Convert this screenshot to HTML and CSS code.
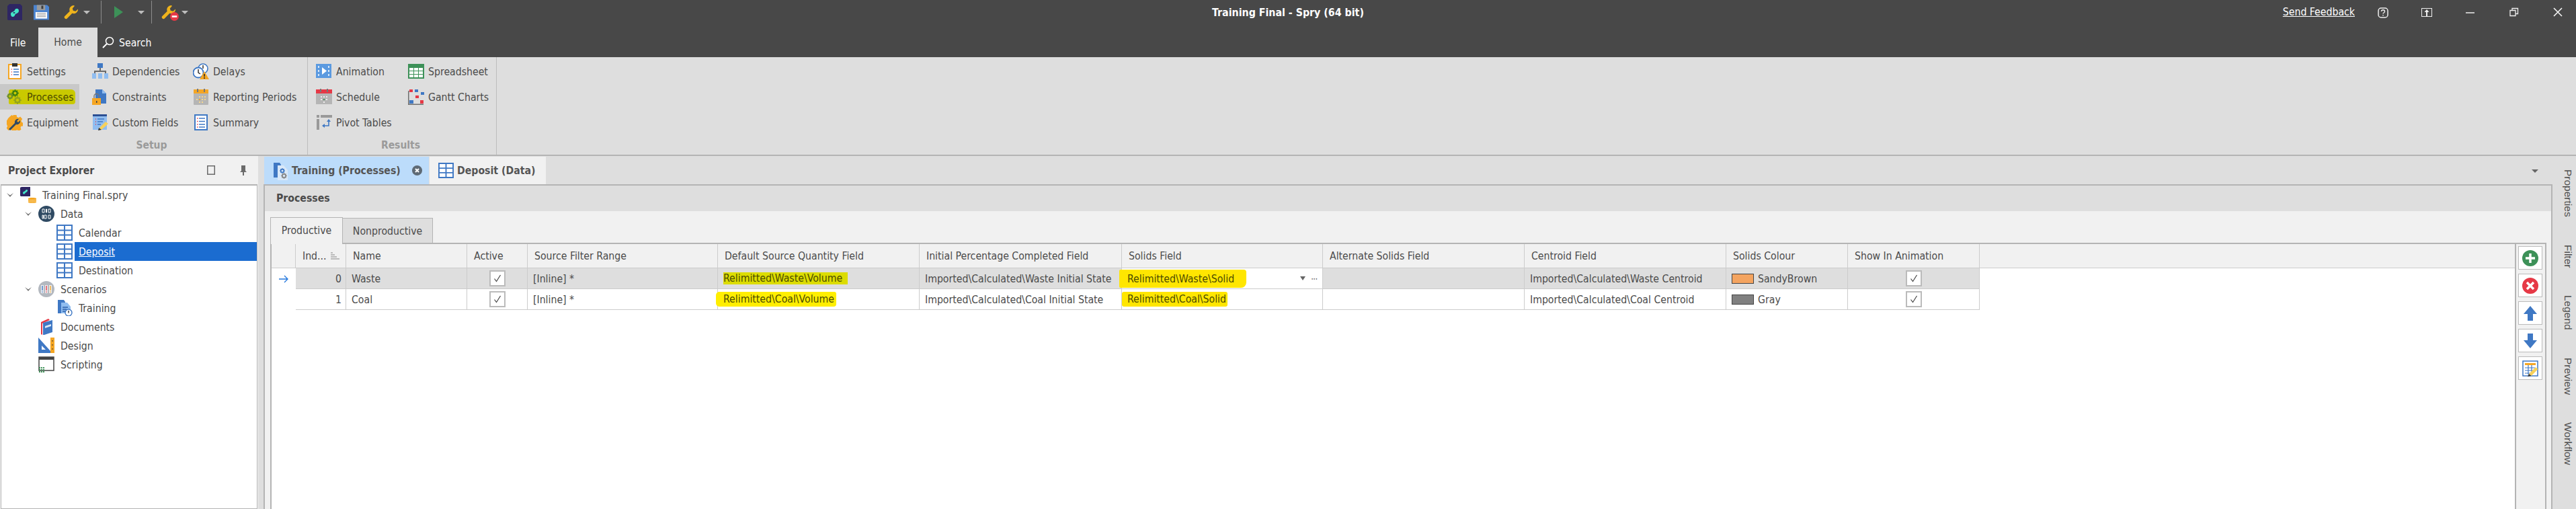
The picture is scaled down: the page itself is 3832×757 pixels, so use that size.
FILE: index.html
```html
<!DOCTYPE html>
<html lang="en">
<head>
<meta charset="utf-8">
<title>Training Final - Spry (64 bit)</title>
<link rel="stylesheet" href="styles.css">
</head>
<body>
<svg class="defs" width="0" height="0" aria-hidden="true">
  <symbol id="i-table" viewBox="0 0 24 24"><path d="M1 1h22v22H1zM12 1v22M1 8.500h22M1 15.500h22" fill="#fff" stroke="#3f78c4" stroke-width="2"/></symbol>
  <symbol id="i-chev" viewBox="0 0 10 8"><path d="M0 1l5 3.500L10 1 5 7z" fill="#6f6f6f"/></symbol>
  <symbol id="i-wrench" viewBox="0 0 24 24"><path d="M16 1a7 7 0 0 0-6.500 9.500L1.500 18.500a2.500 2.500 0 0 0 4 3.500l8-8A7 7 0 0 0 23 7l-4 3.500-4-1-1-3.500 3.500-4z" fill="#eeb31c"/></symbol>
  <symbol id="i-gear" viewBox="0 0 12 12"><circle cx="6" cy="6" r="3.500" fill="none" stroke="currentColor" stroke-width="2.500"/><path d="M6 0v2M6 10v2M0 6h2M10 6h2M2 2l1.500 1.500M8.500 8.500L10 10M10 2L8.500 3.500M3.500 8.500L2 10" stroke="currentColor" stroke-width="1.600"/></symbol>
</svg>

<header class="titlebar">
  <div class="qat-row">
    <div class="qat">
      <svg class="q-logo" viewBox="0 0 24 24"><path d="M2 3l3-3h16l3 3v21H3l-1-1z" fill="#2e2663"/><path d="M7 15c0-4 5-3 6-6 1-3 6-3 6 1 0 3-3 4-5 5-1 1-1 4-4 4-2 0-3-2-3-4zm5-3c2 0 2 2 0 2-2 0-2-2 0-2z" fill="#43e3c6" fill-rule="evenodd"/></svg>
      <svg class="q-save" viewBox="0 0 24 24"><path d="M0 1h21l3 3v20H0z" fill="#4a83cf"/><path d="M5 1h13v8H5z" fill="#9a9a9a"/><path d="M12 2h3v5h-3z" fill="#3d3d3d"/><path d="M3 12h18v10H3z" fill="#fff"/><path d="M5 14h14M5 16.500h14M5 19h14" stroke="#8a8a8a"/></svg>
      <svg class="q-wrench"><use href="#i-wrench"/></svg>
      <span class="caret q-caret1"></span>
      <span class="q-sep"></span>
      <svg class="q-play" viewBox="0 0 13 18"><path d="M0 0l13 9-13 9z" fill="#3d9158"/></svg>
      <span class="caret q-caret2"></span>
      <span class="q-sep q-sep2"></span>
      <span class="q-stop">
        <svg class="q-wrench2"><use href="#i-wrench"/></svg>
        <svg class="q-badge" viewBox="0 0 12 12"><circle cx="6" cy="6" r="6" fill="#e63946"/><path d="M2.500 4.800h7v2.400h-7z" fill="#fff"/></svg>
      </span>
      <span class="caret q-caret3"></span>
    </div>
    <div class="app-title">Training Final - Spry (64 bit)</div>
    <div class="win">
      <a class="feedback">Send Feedback</a>
      <svg class="w-btn w-help" viewBox="0 0 16 16"><rect x="1" y="1" width="14" height="14" rx="4" fill="none" stroke="#eee" stroke-width="1.500"/><path d="M5.500 6c0-3 5-3 5 0 0 2-2.500 2-2.500 3.500M8 11v1.500" fill="none" stroke="#eee" stroke-width="1.400"/></svg>
      <svg class="w-btn w-up" viewBox="0 0 16 16"><rect x=".5" y="1.500" width="15" height="12" fill="none" stroke="#eee"/><path d="M8 3l3.500 4h-2.500v6h-2V7H4.500z" fill="#eee"/></svg>
      <svg class="w-btn w-min" viewBox="0 0 14 14"><path d="M0 7h13" stroke="#eee" stroke-width="1.500"/></svg>
      <svg class="w-btn w-rest" viewBox="0 0 14 14"><path d="M1 4.500h8v8H1zM4 4.500V1.500h8.500v8H9" fill="none" stroke="#eee" stroke-width="1.300"/></svg>
      <svg class="w-btn w-close" viewBox="0 0 14 14"><path d="M1 1l12 12M13 1L1 13" stroke="#f4f4f4" stroke-width="1.600"/></svg>
    </div>
  </div>
  <nav class="menu-row">
    <span class="menu-file">File</span>
    <span class="menu-home">Home</span>
    <svg class="menu-search-ico" viewBox="0 0 18 18"><circle cx="11" cy="7" r="5.500" fill="none" stroke="#fff" stroke-width="1.500"/><path d="M7 11l-6 6" stroke="#fff" stroke-width="2"/></svg>
    <span class="menu-search">Search</span>
  </nav>
</header>

<section class="ribbon">
  <div class="r-group r-setup">
    <div class="r-grid r-grid-setup">
      <div class="r-item"><svg class="r-ico" viewBox="0 0 24 24"><path d="M3 2h18v21H3z" fill="#fff" stroke="#f5a623" stroke-width="2"/><path d="M8 0h8v5H8z" fill="#333"/><path d="M7 9h1M7 13h1M7 17h1" stroke="#e63946" stroke-width="1.500"/><path d="M10 9h8M10 13h8M10 17h8" stroke="#3f78c4" stroke-width="1.500"/></svg><span>Settings</span></div>
      <div class="r-item"><svg class="r-ico" viewBox="0 0 24 24"><path d="M8 0h8v7H8z" fill="#3f78c4"/><path d="M12 7v5M4 16v-4h16v4" fill="none" stroke="#6b6b6b" stroke-width="2"/><path d="M0 15h6v8H0zM9 15h6v8H9zM18 15h6v8h-6z" fill="#90bdf0"/></svg><span>Dependencies</span></div>
      <div class="r-item"><svg class="r-ico" viewBox="0 0 24 24"><circle cx="15" cy="8" r="7" fill="#fff" stroke="#3f78c4" stroke-width="1.600"/><circle cx="8" cy="14" r="7.500" fill="#fff" stroke="#3f78c4" stroke-width="1.800"/><path d="M8 9v5l3 2M15 3v5" fill="none" stroke="#333" stroke-width="1.500"/><path d="M17 12l7 12H10z" fill="#f5a623"/><path d="M17 16v4M17 21v2" stroke="#222" stroke-width="1.500"/></svg><span>Delays</span></div>

      <div class="r-item r-hot"><mark class="marker-hot"><svg class="r-ico r-ico-hot" viewBox="0 0 24 24"><g color="#6e8f2b"><use href="#i-gear" x="0" y="6" width="10" height="10"/></g><g color="#3a7d10"><use href="#i-gear" x="7" y="1" width="11" height="11"/></g><g color="#93a31c"><use href="#i-gear" x="10" y="11" width="12" height="12"/></g></svg><span>Processes</span></mark></div>
      <div class="r-item"><svg class="r-ico" viewBox="0 0 24 24"><path d="M5 1h10l6 6v15H5z" fill="#3f78c4"/><path d="M15 1l6 6h-6z" fill="#90bdf0"/><path d="M0 14h13v10H0z" fill="#f5a623"/><path d="M3 14v-3a3.500 3.500 0 0 1 7 0v3" fill="none" stroke="#777" stroke-width="1.500"/><path d="M6 18h1.500v3H6z" fill="#444"/></svg><span>Constraints</span></div>
      <div class="r-item"><svg class="r-ico" viewBox="0 0 24 24"><path d="M1 1h22v22H1z" fill="#f5a623"/><path d="M1 7h22v16a1 1 0 0 1-1 1H2a1 1 0 0 1-1-1z" fill="#b5b5b5"/><path d="M6 0h2v5H6zM16 0h2v5h-2z" fill="#777"/><path d="M9 11h2v2H9zM13 11h2v2h-2zM17 11h2v2h-2zM5 15h2v2H5zM13 15h2v2h-2zM17 15h2v2h-2zM9 19h2v2H9zM13 19h2v2h-2z" fill="#f5d78e"/><path d="M9 15h2v2H9z" fill="#f5a623"/></svg><span>Reporting Periods</span></div>

      <div class="r-item"><svg class="r-ico" viewBox="0 0 24 24"><path d="M9.500 1h5l.7 3 2.300 1 2.700-1.500 3 3.500-1.700 2.500.7 2.300 2.800 1-.5 4.500-3 .5-1 2 1 2.700-3.500 2.500-2.300-1.700-2.200.7-1 2.500h-4.500l-.7-3-2.300-1-2.500 1.500-3-3.500 1.600-2.500-.7-2.300-2.700-.8V9.500l3-.7 1-2.300L4 4l3.500-3 2 1.500z" fill="#f5a623"/><path d="M3 22l9-9a5 5 0 0 1 6-6l-3 3 2 2 3-3a5 5 0 0 1-6 6l-9 9z" fill="#2f4a63"/></svg><span>Equipment</span></div>
      <div class="r-item"><svg class="r-ico" viewBox="0 0 24 24"><path d="M1 0h21v23H1z" fill="#90bdf0"/><path d="M1 0h21v3H1z" fill="#2b4f93"/><path d="M5 7h1M5 11h1M5 15h1" stroke="#e63946" stroke-width="1.500"/><path d="M8 7h10M8 11h8M8 15h5" stroke="#3f78c4" stroke-width="1.500"/><path d="M10 21l10-10 4 3-10 9z" fill="#f7d15a"/><path d="M9 24l1-4 4 3z" fill="#333"/></svg><span>Custom Fields</span></div>
      <div class="r-item"><svg class="r-ico" viewBox="0 0 24 24"><path d="M3 1h18v22H3z" fill="#fff" stroke="#3f78c4" stroke-width="2"/><path d="M6 6h1.500M6 10.500h1.500M6 15h1.500M6 19h1.500" stroke="#e63946" stroke-width="1.500"/><path d="M9 6h9M9 10.500h9M9 15h9M9 19h9" stroke="#3f78c4" stroke-width="1.500"/></svg><span>Summary</span></div>
    </div>
    <div class="r-label">Setup</div>
  </div>
  <div class="r-group r-results">
    <div class="r-grid r-grid-results">
      <div class="r-item"><svg class="r-ico" viewBox="0 0 24 24"><path d="M0 1h23v21H0z" fill="#5b9ae0"/><path d="M3 4h2v3H3zM3 10h2v3H3zM3 16h2v3H3zM18 4h2v3h-2zM18 10h2v3h-2zM18 16h2v3h-2z" fill="#d9e8f8"/><path d="M9 6l7 5.500L9 17z" fill="#fff"/></svg><span>Animation</span></div>
      <div class="r-item"><svg class="r-ico" viewBox="0 0 24 24"><path d="M0 1h24v22H0z" fill="#3d9158"/><path d="M2 7h6v4H2zM9 7h6v4H9zM16 7h6v4h-6zM2 12h6v4H2zM9 12h6v4H9zM16 12h6v4h-6zM2 17h6v4H2zM9 17h6v4H9zM16 17h6v4h-6z" fill="#fff"/></svg><span>Spreadsheet</span></div>
      <div class="r-item"><svg class="r-ico" viewBox="0 0 24 24"><path d="M0 1h24v22H0z" fill="#b5b5b5"/><path d="M0 1h24v6H0z" fill="#e63946"/><path d="M6 0h2v5H6zM16 0h2v5h-2z" fill="#777"/><path d="M7 11h2v2H7zM11 11h2v2h-2zM15 11h2v2h-2zM7 15h2v2H7zM15 15h2v2h-2zM11 19h2v2h-2z" fill="#eee"/><path d="M11 15h2v2h-2z" fill="#3d9158"/></svg><span>Schedule</span></div>
      <div class="r-item"><svg class="r-ico" viewBox="0 0 24 24"><path d="M.750 3v20.250H23" fill="none" stroke="#6f6f6f" stroke-width="1.500"/><path d="M2 1h5v4H2z" fill="#e63946"/><path d="M10 1h5v4h-5zM19 5h5v4h-5zM2 17h6v5H2z" fill="#3f78c4"/><path d="M11 10h5v4h-5zM18 17h5v5h-5z" fill="#e63946"/></svg><span>Gantt Charts</span></div>
      <div class="r-item"><svg class="r-ico" viewBox="0 0 24 24"><path d="M7 1h17v4H7zM1 1h4v4H1zM1 7h4v16H1z" fill="#999"/><path d="M19 9v8h-8" fill="none" stroke="#3f78c4" stroke-width="1.600"/><path d="M19 7l3 4h-6zM9 17l4-3v6z" fill="#3f78c4"/></svg><span>Pivot Tables</span></div>
    </div>
    <div class="r-label">Results</div>
  </div>
</section>

<main class="workspace">
  <aside class="explorer">
    <div class="ex-head">
      <span class="ex-title">Project Explorer</span>
      <svg class="ex-square" viewBox="0 0 12 14"><path d="M.750.750h10.500v12.500H.750z" fill="none" stroke="#6b6b6b" stroke-width="1.500"/></svg>
      <svg class="ex-pin" viewBox="0 0 10 15"><path d="M2 0h6v8l2 2H0l2-2zM4 10h2v5H4z" fill="#6b6b6b"/></svg>
    </div>
    <div class="tree">
      <div class="t-row lv0"><svg class="chev"><use href="#i-chev"/></svg><svg class="t-ico" viewBox="0 0 24 24"><path d="M0 1l2-1h13v14H1l-1-1z" fill="#2e2663"/><path d="M4 9c0-3 4-2 4-4 1-2 4-1 3 1-1 2-3 2-4 4-1 1-3 1-3-1z" fill="#43e3c6"/><path d="M12 17c0-1.500 12-1.500 12 0v6c0 1.500-12 1.500-12 0z" fill="#f5a623"/><path d="M12 19c2 1 10 1 12 0M12 21.500c2 1 10 1 12 0" stroke="#fad68a" fill="none"/></svg><span class="t-label">Training Final.spry</span></div>
      <div class="t-row lv1"><svg class="chev"><use href="#i-chev"/></svg><svg class="t-ico" viewBox="0 0 24 24"><circle cx="12" cy="12" r="12" fill="#2f4a63"/><path d="M6 5h3v5H6zM11.500 5h1v5h-1zM15 5h3v5h-3zM6 14h1.500v5H6zM9 14h3v5H9zM15 14h3v5h-3z" fill="none" stroke="#fff"/></svg><span class="t-label">Data</span></div>
      <div class="t-row lv2"><svg class="t-ico"><use href="#i-table"/></svg><span class="t-label">Calendar</span></div>
      <div class="t-row lv2"><svg class="t-ico"><use href="#i-table"/></svg><span class="t-label t-sel">Deposit</span></div>
      <div class="t-row lv2"><svg class="t-ico"><use href="#i-table"/></svg><span class="t-label">Destination</span></div>
      <div class="t-row lv1"><svg class="chev"><use href="#i-chev"/></svg><svg class="t-ico" viewBox="0 0 24 24"><circle cx="12" cy="12" r="12" fill="#b3b8bf"/><path d="M4 6h4v12H4zM10 6h4v12h-4zM16 6h4v12h-4z" fill="#eef0f3"/><path d="M6 7v7M6 15.500v1.500" stroke="#3f78c4" stroke-width="1.400"/><path d="M12 7v7M12 15.500v1.500" stroke="#e63946" stroke-width="1.400"/><path d="M18 7v7M18 15.500v1.500" stroke="#f5a623" stroke-width="1.400"/></svg><span class="t-label">Scenarios</span></div>
      <div class="t-row lv2"><svg class="t-ico" viewBox="0 0 24 24"><path d="M2 0h9l2 3v17H2z" fill="#3f78c4"/><path d="M7 4h9l5 6v10H7z" fill="#90bdf0"/><path d="M9 11h8M9 14h6M9 17h5" stroke="#2b5fa8" stroke-width="1.300"/><circle cx="18" cy="19" r="5" fill="#fff" stroke="#3f78c4" stroke-width="1.400"/><path d="M18 16v3.500" stroke="#222" stroke-width="1.300"/></svg><span class="t-label">Training</span></div>
      <div class="t-row lv1 leaf"><svg class="t-ico" viewBox="0 0 24 24"><path d="M4 5L15 0l2 2-11 5v17L4 23z" fill="#e63946"/><path d="M7 6l14-4v18L9 24H7z" fill="#3f78c4"/><path d="M10 11l9-3v3l-9 3z" fill="#dce8f7"/></svg><span class="t-label">Documents</span></div>
      <div class="t-row lv1 leaf"><svg class="t-ico" viewBox="0 0 24 24"><path d="M0 0l18 20v3H0zM5 12v6h6z" fill="#3f78c4" fill-rule="evenodd"/><path d="M18 0h6v23h-6z" fill="#f5a623"/><path d="M20 5h2M20 11h2M20 17h2" stroke="#333" stroke-width="1.200"/></svg><span class="t-label">Design</span></div>
      <div class="t-row lv1 leaf"><svg class="t-ico" viewBox="0 0 24 24"><path d="M1 1h22v20H1z" fill="#fff" stroke="#444" stroke-width="1.500"/><path d="M1 1h22v4H1z" fill="#444"/><path d="M1 16h2v2H1zM4 16h2v2H4zM7 16h2v2H7zM1 19h2v2H1zM4 19h2v2H4zM7 19h2v2H7zM1 22h2v2H1zM4 22h2v2H4zM7 22h2v2H7z" fill="#3d9158"/></svg><span class="t-label">Scripting</span></div>
    </div>
  </aside>

  <section class="documents">
    <div class="doc-tabs">
      <div class="doc-tab doc-active">
        <svg class="dt-ico" viewBox="0 0 22 28"><path d="M0 2h9l2 3v19H0z" fill="#3f78c4"/><path d="M6 6h9l6 7v15H6z" fill="#d9e8f8"/><g color="#3f78c4"><use href="#i-gear" x="9" y="10" width="8" height="8"/></g><g color="#888"><use href="#i-gear" x="11" y="17" width="9" height="9"/></g></svg>
        <span class="dt-text">Training (Processes)</span>
        <svg class="dt-close" viewBox="0 0 15 15"><circle cx="7.500" cy="7.500" r="7.500" fill="#5e6a75"/><path d="M5 5l5 5M10 5l-5 5" stroke="#fff" stroke-width="2"/></svg>
      </div>
      <div class="doc-tab doc-plain">
        <svg class="dt-table"><use href="#i-table"/></svg>
        <span class="dt-text">Deposit (Data)</span>
      </div>
      <span class="doc-menu"></span>
    </div>
    <div class="panel">
      <div class="panel-head">Processes</div>
      <div class="panel-body">
        <div class="sub-tabs">
          <span class="sub-tab sub-on">Productive</span>
          <span class="sub-tab sub-off">Nonproductive</span>
        </div>
        <div class="grid-box">
          <div class="grid-area">
            <div class="g-head">
              <div class="g-row">
                <div class="g-h"></div>
                <div class="g-h g-ind">Ind...<svg class="sort" viewBox="0 0 13 12"><path d="M0 1h3M0 4h6M0 7h9M0 10h13" stroke="#a9a9a9" stroke-width="1.400"/></svg></div>
                <div class="g-h">Name</div>
                <div class="g-h">Active</div>
                <div class="g-h">Source Filter Range</div>
                <div class="g-h">Default Source Quantity Field</div>
                <div class="g-h">Initial Percentage Completed Field</div>
                <div class="g-h">Solids Field</div>
                <div class="g-h">Alternate Solids Field</div>
                <div class="g-h">Centroid Field</div>
                <div class="g-h">Solids Colour</div>
                <div class="g-h">Show In Animation</div>
              </div>
            </div>
            <div class="g-row g-current">
              <div class="g-mark"><svg class="arrow" viewBox="0 0 14 12"><path d="M0 6h13M8 1l5 5-5 5" fill="none" stroke="#2277dd" stroke-width="1.300"/></svg></div>
              <div class="g-c g-num">0</div>
              <div class="g-c">Waste</div>
              <div class="g-c g-center"><span class="check"><svg viewBox="0 0 12 12"><path d="M1.500 6.500L4.500 10.500 10.500 1" fill="none" stroke="#444" stroke-width="1.200"/></svg></span></div>
              <div class="g-c">[Inline] *</div>
              <div class="g-c"><mark class="mk mk-olive">Relimitted\Waste\Volume</mark></div>
              <div class="g-c">Imported\Calculated\Waste Initial State</div>
              <div class="g-c g-edit"><mark class="mk mk-solid1">Relimitted\Waste\Solid</mark><span class="edit-tools"><span class="mini-caret"></span><span class="mini-dots">•••</span></span></div>
              <div class="g-c"></div>
              <div class="g-c">Imported\Calculated\Waste Centroid</div>
              <div class="g-c g-color"><span class="swatch sw-brown"></span>SandyBrown</div>
              <div class="g-c g-center"><span class="check"><svg viewBox="0 0 12 12"><path d="M1.500 6.500L4.500 10.500 10.500 1" fill="none" stroke="#444" stroke-width="1.200"/></svg></span></div>
            </div>
            <div class="g-row">
              <div class="g-mark"></div>
              <div class="g-c g-num">1</div>
              <div class="g-c">Coal</div>
              <div class="g-c g-center"><span class="check"><svg viewBox="0 0 12 12"><path d="M1.500 6.500L4.500 10.500 10.500 1" fill="none" stroke="#444" stroke-width="1.200"/></svg></span></div>
              <div class="g-c">[Inline] *</div>
              <div class="g-c"><mark class="mk mk-yellow">Relimitted\Coal\Volume</mark></div>
              <div class="g-c">Imported\Calculated\Coal Initial State</div>
              <div class="g-c"><mark class="mk mk-solid2">Relimitted\Coal\Solid</mark></div>
              <div class="g-c"></div>
              <div class="g-c">Imported\Calculated\Coal Centroid</div>
              <div class="g-c g-color"><span class="swatch sw-gray"></span>Gray</div>
              <div class="g-c g-center"><span class="check"><svg viewBox="0 0 12 12"><path d="M1.500 6.500L4.500 10.500 10.500 1" fill="none" stroke="#444" stroke-width="1.200"/></svg></span></div>
            </div>
          </div>
          <div class="grid-tools">
            <button class="tool"><svg viewBox="0 0 24 24"><circle cx="12" cy="12" r="12" fill="#3d9158"/><path d="M12 5v14M5 12h14" stroke="#fff" stroke-width="3.500"/></svg></button>
            <button class="tool"><svg viewBox="0 0 24 24"><circle cx="12" cy="12" r="12" fill="#e63946"/><path d="M7 7l10 10M17 7L7 17" stroke="#fff" stroke-width="3.500"/></svg></button>
            <button class="tool"><svg viewBox="0 0 24 24"><path d="M12 1l10 12h-6v10H8V13H2z" fill="#3f78c4"/></svg></button>
            <button class="tool"><svg viewBox="0 0 24 24"><path d="M12 23l10-12h-6V1H8v10H2z" fill="#3f78c4"/></svg></button>
            <button class="tool"><svg viewBox="0 0 24 24"><path d="M1 1h22v22H1z" fill="#fff" stroke="#3f78c4" stroke-width="1.500"/><path d="M4 4h16v3H4z" fill="#f5a623"/><path d="M4 11h15M4 15h12M4 19h8M9 7v14M14 7v10" stroke="#3f78c4" stroke-width="1.200"/><path d="M10 20L20 10l3.500 3-10 10z" fill="#f7d15a"/><path d="M8 24l2-4 3.500 3z" fill="#333"/></svg></button>
          </div>
        </div>
      </div>
    </div>
  </section>

  <aside class="side-strip">
    <span>Properties</span>
    <span>Filter</span>
    <span>Legend</span>
    <span>Preview</span>
    <span>Workflow</span>
  </aside>
</main>
</body>
</html>
```
FILE: styles.css
```css
* { box-sizing: border-box; }
html, body { margin: 0; padding: 0; }
body {
  width: 3832px;
  height: 757px;
  overflow: hidden;
  display: flex;
  flex-direction: column;
  background: #dedede;
  color: #4b4b4b;
  font-family: "DejaVu Sans Condensed", "DejaVu Sans", sans-serif;
  font-stretch: condensed;
  font-size: 15.700px;
}
.defs { position: absolute; }
svg { display: block; flex: none; }

/* Title bar */
.titlebar { height: 85px; flex: none; background: #484848; color: #fff; }
.qat-row { height: 41px; display: grid; grid-template-columns: 1fr auto 1fr; align-items: start; }
.qat { display: flex; align-items: flex-start; padding-left: 9px; }
.q-logo { width: 24px; height: 24px; margin-top: 6px; }
.q-save { width: 23px; height: 24px; margin: 6px 0 0 17px; }
.q-wrench { width: 22px; height: 22px; margin: 7px 0 0 22px; }
.caret { width: 0; height: 0; border-left: 5px solid transparent; border-right: 5px solid transparent; border-top: 5px solid #bdbdbd; margin-top: 16px; }
.q-caret1 { margin-left: 7px; }
.q-sep { width: 1px; height: 34px; background: #8c8c8c; margin: 1px 0 0 16px; }
.q-play { width: 13px; height: 18px; margin: 9px 0 0 19px; }
.q-caret2 { margin-left: 22px; }
.q-sep2 { margin-left: 10px; }
.q-stop { position: relative; width: 22px; height: 24px; margin: 7px 0 0 14px; }
.q-wrench2 { width: 22px; height: 22px; }
.q-badge { position: absolute; width: 13px; height: 13px; left: 13px; top: 11px; }
.q-caret3 { margin-left: 8px; }
.app-title { font-weight: 700; font-size: 15.800px; padding-top: 9px; line-height: 20px; color: #fff; }
.win { display: flex; justify-content: flex-end; align-items: flex-start; padding-right: 20px; }
.feedback { text-decoration: underline; line-height: 20px; margin-top: 8px; color: #fff; }
.w-btn { margin-top: 11px; }
.w-help { width: 16px; height: 16px; margin-left: 34px; }
.w-up { width: 16px; height: 16px; margin-left: 49px; }
.w-min { width: 14px; height: 14px; margin-left: 50px; margin-top: 12px; }
.w-rest { width: 14px; height: 14px; margin-left: 51px; }
.w-close { width: 14px; height: 14px; margin-left: 51px; }

.menu-row { height: 44px; display: flex; align-items: center; }
.menu-file { padding-left: 15px; width: 57px; }
.menu-home { width: 88px; height: 44px; background: #dedede; color: #4b4b4b; text-align: center; line-height: 44px; }
.menu-search-ico { width: 18px; height: 18px; margin-left: 7px; }
.menu-search { margin-left: 7px; }

/* Ribbon */
.ribbon { height: 147px; flex: none; display: flex; background: #dedede; border-bottom: 2px solid #b4b4b4; }
.r-group { display: flex; flex-direction: column; border-right: 1px solid #bdbdbd; padding-top: 2px; }
.r-setup { width: 458px; }
.r-results { width: 281px; padding-left: 2px; }
.r-grid { display: grid; grid-auto-rows: 38px; height: 114px; justify-items: start; }
.r-grid-setup { grid-template-columns: 127px 150px 180px; }
.r-grid-results { grid-template-columns: 137px 141px; }
.r-item { display: flex; align-items: center; width: 118px; padding-left: 10px; gap: 6px; white-space: nowrap; height: 38px; }
.r-ico { width: 24px; height: 24px; }
.r-hot { background: #c8c8c8; padding-left: 0; }
.marker-hot { display: flex; align-items: center; gap: 6px; background: #c9c900; color: #4d4d00; height: 22px; margin-left: 13px; padding: 0 2px 0 0; border-radius: 3px 6px 4px 2px; }
.r-ico-hot { margin-left: -3px; }
.r-label { text-align: center; color: #9a9a9a; font-weight: 700; font-size: 15.500px; line-height: 20px; padding-top: 5px; padding-right: 6px; }

/* Workspace */
.workspace { flex: 1; min-height: 0; display: flex; overflow: hidden; }
.explorer { width: 384px; flex: none; background: #f1f1f1; display: flex; flex-direction: column; margin-right: 8px; }
.ex-head { height: 42px; flex: none; display: flex; align-items: center; padding: 0 17px 0 12px; }
.ex-title { font-weight: 700; margin-right: auto; font-size: 15.700px; }
.ex-square { width: 12px; height: 14px; }
.ex-pin { width: 10px; height: 15px; margin-left: 37px; }
.tree { flex: 1; background: #fff; margin-left: 1px; margin-right: 1px; border: 1px solid #b4b4b4; border-top-width: 2px; }
.t-row { height: 28px; display: flex; align-items: center; }
.lv0 { padding-left: 8px; }
.lv1 { padding-left: 35px; }
.lv1.leaf { padding-left: 55px; }
.lv2 { padding-left: 82px; }
.chev { width: 10px; height: 8px; margin-right: 10px; }
.t-ico { width: 24px; height: 24px; }
.t-label { flex: 1; align-self: stretch; display: flex; align-items: center; margin-left: 3px; padding-left: 6px; color: #4b4b4b; }
.t-sel { background: #1b6cd0; color: #fff; text-decoration: underline; }

/* Documents */
.documents { flex: 1; min-width: 0; display: flex; flex-direction: column; }
.doc-tabs { height: 42px; flex: none; display: flex; align-items: stretch; padding: 1px 21px 0 1px; }
.doc-tab { display: flex; align-items: center; }
.doc-active { width: 245px; background: #bcdcfb; padding: 0 10px 0 14px; margin-right: 1px; }
.doc-plain { width: 173px; background: #f1f1f1; padding-left: 13px; }
.dt-ico { width: 22px; height: 28px; }
.dt-text { margin-left: 5px; font-size: 15.700px; font-weight: 700; color: #555; white-space: nowrap; }
.dt-close { width: 15px; height: 15px; margin-left: auto; }
.dt-table { width: 23px; height: 23px; }
.doc-menu { margin: 19px 0 0 auto; width: 0; height: 0; border-left: 5px solid transparent; border-right: 5px solid transparent; border-top: 5px solid #666; }
.panel { flex: 1; min-height: 0; border: 2px solid #b4b4b4; border-bottom: 0; background: #f1f1f1; display: flex; flex-direction: column; }
.panel-head { height: 38px; flex: none; background: #dedede; font-weight: 700; padding-left: 17px; line-height: 38px; font-size: 15.700px; }
.panel-body { flex: 1; min-height: 0; padding: 9px 7px 0 8px; display: flex; flex-direction: column; }
.sub-tabs { display: flex; align-items: flex-end; height: 39px; flex: none; margin-bottom: -1px; position: relative; }
.sub-tab { display: block; height: 39px; line-height: 37px; text-align: center; border: 1px solid #b4b4b4; }
.sub-on { width: 108px; background: #f1f1f1; border-bottom: 0; height: 40px; margin-bottom: -1px; }
.sub-off { width: 134px; background: #dedede; height: 38px; border-left: 0; }
.grid-box { flex: 1; min-height: 0; display: flex; border: 2px solid #b4b4b4; border-bottom: 0; }
.grid-area { flex: 1; min-width: 0; background: #fff; border-right: 2px solid #b4b4b4; }
.g-head { background: #f1f1f1; border-bottom: 1px solid #ccc; height: 36px; }
.g-row { display: grid; width: 2541px; grid-template-columns: 36px 75px 180px 90px 283px 300px 301px 299px 300px 300px 181px 196px; height: 31px; }
.g-head .g-row { height: 35px; }
.g-h { display: flex; align-items: center; padding-left: 10px; border-right: 1px solid #ccc; white-space: nowrap; min-width: 0; }
.g-h:first-child { padding-left: 0; }
.g-ind { justify-content: flex-start; }
.sort { width: 13px; height: 12px; margin-left: 6px; }
.g-mark { display: flex; align-items: center; justify-content: center; background: #fff; }
.arrow { width: 14px; height: 12px; }
.g-c { display: flex; align-items: center; padding-left: 8px; border-right: 1px solid #ccc; border-bottom: 1px solid #ccc; white-space: nowrap; min-width: 0; background: #fff; color: #4b4b4b; }
.g-current .g-c { background: #dedede; }
.g-current .g-edit { background: #fff; }
.g-num { justify-content: flex-end; padding: 0 6px 0 0; }
.g-center { justify-content: center; padding-left: 0; }
.check { width: 24px; height: 24px; background: #fff; border: 2px solid #bbb; display: flex; align-items: center; justify-content: center; }
.check svg { width: 12px; height: 12px; }
.mk { display: block; color: #4b4b00; }
.mk-olive { background: #dcdc00; padding: 0 8px 0 0; height: 18px; line-height: 18px; }
.mk-yellow { background: #ffee00; margin-left: -11px; padding: 0 3px 0 11px; height: 22px; line-height: 22px; border-radius: 5px 3px 4px 5px; }
.mk-solid1 { background: #ffe600; margin-left: -12px; padding: 0 18px 0 12px; height: 27px; line-height: 27px; border-radius: 2px 4px 8px 2px; }
.mk-solid2 { background: #ffe600; margin-left: -8px; padding: 0 2px 0 8px; height: 22px; line-height: 22px; border-radius: 3px; }
.edit-tools { margin-left: auto; display: flex; align-items: center; gap: 8px; padding-right: 7px; }
.mini-caret { width: 0; height: 0; border-left: 4px solid transparent; border-right: 4px solid transparent; border-top: 6px solid #666; }
.mini-dots { font-size: 6px; color: #555; letter-spacing: 0; }
.g-color { gap: 6px; }
.swatch { width: 33px; height: 15px; border: 1px solid #444; }
.sw-brown { background: #f4a460; }
.sw-gray { background: #808080; }
.grid-tools { width: 43px; flex: none; padding: 3px 0 0 3px; display: flex; flex-direction: column; gap: 6px; }
.tool { width: 36px; height: 35px; padding: 0; border: 1px solid #bbb; background: #fff; display: flex; align-items: center; justify-content: center; }
.tool svg { width: 24px; height: 24px; }

/* Side strip */
.side-strip { width: 35px; flex: none; display: flex; flex-direction: column; align-items: center; gap: 41px; padding: 20px 0 0 10px; color: #4f4f4f; font-family: "Liberation Sans", sans-serif; font-stretch: normal; font-size: 15.500px; }
.side-strip span { writing-mode: vertical-rl; }
```
